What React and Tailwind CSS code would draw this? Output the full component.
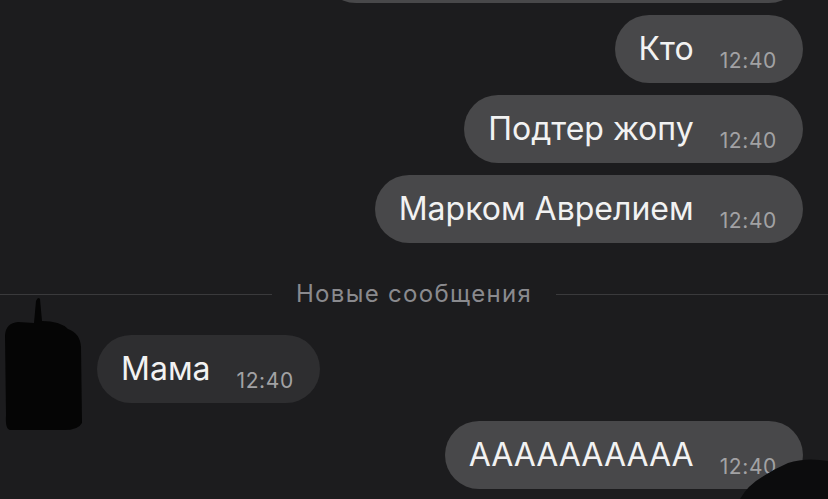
import React from 'react'

const font = { fontFamily: 'Inter, "Noto Sans", sans-serif' }

function Bubble({ text, incoming, className = '' }) {
    return (
        <div
            className={`flex items-center h-[68px] rounded-full pl-6 pr-[26px] ${incoming ? 'bg-[#2e2e30]' : 'bg-[#48484a]'} ${className}`}
        >
            <span className="text-[32px] leading-none text-[#f2f2f2] whitespace-nowrap">{text}</span>
            <span className="ml-[26px] mt-[23px] text-[21px] leading-none tracking-[0.03em] text-[#a2a2a4] whitespace-nowrap">12:40</span>
        </div>
    )
}

export default function App() {
    return (
        <div className="relative w-[828px] h-[499px] overflow-hidden bg-[#1c1c1e]" style={font}>
            <div className="flex flex-col -mt-[65px]">
                <div className="flex justify-end pr-[25px]">
                    <div className="h-[68px] w-[481px] rounded-full bg-[#48484a]" />
                </div>

                <div className="flex flex-col items-end gap-3 pr-[25px] mt-3">
                    <Bubble text="Кто" />
                    <Bubble text="Подтер жопу" />
                    <Bubble text="Марком Аврелием" />
                </div>

                <div className="flex items-center mt-[38px] h-[26px]">
                    <div className="flex-1 h-px bg-[#3a3a3c]" />
                    <span className="px-6 text-[24px] leading-none tracking-[0.055em] text-[#8a8a8e]">Новые сообщения</span>
                    <div className="flex-1 h-px bg-[#3a3a3c]" />
                </div>

                <div className="flex pl-[97px] mt-[28px]">
                    <Bubble text="Мама" incoming />
                </div>

                <div className="flex justify-end pr-[25px] mt-[18px]">
                    <Bubble text="АААААААААА" />
                </div>
            </div>

            {/* scribbled-over avatar */}
            <svg className="absolute left-0 top-[295px]" width="90" height="140" viewBox="0 0 90 140">
                <path
                    d="M34 28 L36 6 Q38 1 40 4 L42 26 Q60 26 68 34 Q80 38 81 52 L82 128 Q78 136 60 135 L10 135 Q5 134 6 120 L5 40 Q6 28 18 27 Z"
                    fill="#050505"
                />
            </svg>

            {/* scribble bottom right */}
            <svg className="absolute left-[740px] top-[455px]" width="88" height="44" viewBox="0 0 88 44">
                <path
                    d="M0 44 Q8 30 22 22 Q34 14 48 8 Q66 2 88 6 L88 44 Z"
                    fill="#0c0c0d"
                />
            </svg>
        </div>
    )
}
